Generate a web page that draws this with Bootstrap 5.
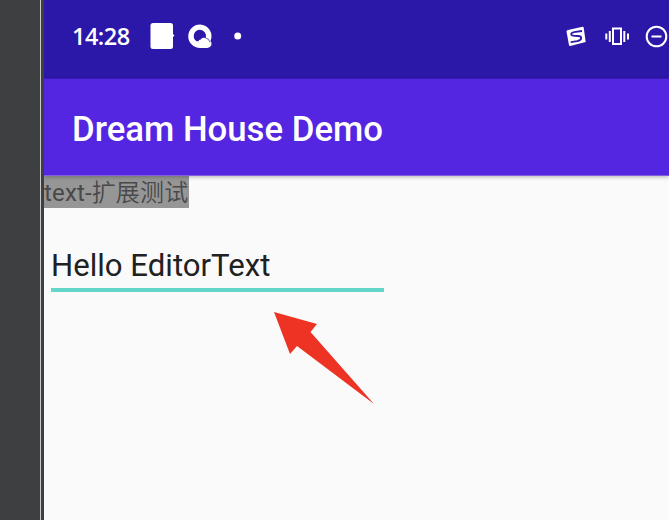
<!DOCTYPE html>
<html lang="zh">
<head>
<meta charset="utf-8">
<meta name="viewport" content="width=device-width, initial-scale=1">
<title>Dream House Demo</title>
<link rel="stylesheet" href="https://cdn.jsdelivr.net/npm/bootstrap@5.3.0/dist/css/bootstrap.min.css">
<style>
body{background:#fafafa;font-family:Roboto,"Noto Sans CJK SC",sans-serif}
.desk-edge{width:44px;background:#3e3f41;padding-left:40px}
.desk-line{width:1px;background:#c9c9c9;height:100%}
.status-strip{height:79px;background:#2b18a9;padding:0 1px 7px 28px;border-bottom:1px solid #3c1dc0}
.clock-text{font:600 23.5px/30px "Open Sans",sans-serif;width:78px;letter-spacing:-.5px}
.app-title-bar{height:97px;background:#5526e2;padding:3px 28px 0;box-shadow:0 1px 4px rgba(0,0,0,.28);border-bottom:1px solid #7f60dc}
.app-title{font-size:34.75px;font-weight:500;line-height:40px}
.tag-label{width:145px;height:32px;background:#969696;color:#494949;font-size:24px;line-height:29px;letter-spacing:.15px}
.tag-label span{font-family:"Noto Sans CJK SC",sans-serif;font-weight:350}
.editor-field{width:333px;height:54px;margin:30px 0 0 7px;border-bottom:4px solid #62d6c8;color:#212121;font-size:31.15px;line-height:56px}
.pointer-arrow{left:274px;top:312px}
</style>
<script src="https://cdn.jsdelivr.net/npm/bootstrap@5.3.0/dist/js/bootstrap.bundle.min.js"></script>
</head>
<body class="overflow-hidden">
<div class="d-flex vh-100 position-relative">
  <aside class="desk-edge flex-shrink-0"><div class="desk-line"></div></aside>
  <main class="flex-grow-1 overflow-hidden">
    <header class="status-strip d-flex align-items-center text-white">
      <span class="clock-text">14:28</span>
      <svg width="92" height="30" viewBox="150 21 92 30" fill="#fff">
        <path d="M153 23h17.500q2.500 0 2.500 2.500V34l1.500 1.500-1.500 1.500v9.500q0 2.500-2.500 2.500H153q-2.500 0-2.500-2.500v-21q0-2.500 2.500-2.500z"/>
        <path fill-rule="evenodd" d="M200 24.500a11.700 11.700 0 0 1 10.500 16.500q1.700 2 .8 4.300-1 2.700-4 2.700H200a11.700 11.700 0 0 1 0-23.500zM200 29.800a6.300 6.300 0 0 0-3.500 11.500l2 0q.3-2 2.300-1.900.8-1.900 3.200-1.600l1.800.2A6.300 6.300 0 0 0 200 29.800z"/>
        <path d="M205.500 38l2.800 1.200 1.800 3" fill="none" stroke="#2b18a9" stroke-width=".7"/>
        <circle cx="237.700" cy="36" r="3.500"/>
      </svg>
      <svg class="ms-auto" width="104" height="30" viewBox="564 21 104 30">
        <path d="M568 30l14.500-3.300q1 0 1.200.8l2 14.500-15.500 4q-1 0-1.200-.8l-2.500-13.700q0-1.200 1.500-1.500z" fill="#fff"/>
        <path d="M582 31l-6.500.9q-4.500.8-4.300 2.500.3 1.500 3.800 1.500l3 .1q3.200.2 3.200 2 0 2.300-4 3.200l-6.500.9" fill="none" stroke="#2b18a9" stroke-width="1.800"/>
        <g fill="none" stroke="#fff" stroke-width="2"><path d="M613 28.500h8v15.500h-8zM609.800 31v11M606.300 33.500v6M624.300 31v11M628 33.500v6"/><circle cx="656.500" cy="36.500" r="9.800"/><path d="M651.500 36.500h10"/></g>
      </svg>
    </header>
    <div class="app-title-bar d-flex align-items-center text-white position-relative"><h1 class="app-title m-0 text-nowrap">Dream House Demo</h1></div>
    <div class="tag-label text-nowrap">text-<span>扩展测试</span></div>
    <div class="editor-field text-nowrap">Hello EditorText</div>
  </main>
  <svg class="pointer-arrow position-absolute" width="101" height="93" viewBox="274 312 101 93"><path fill="#ed3323" d="M274 312L317 324 310.500 332 374 404 297 346 290 354z"/></svg>
</div>
</body>
</html>
